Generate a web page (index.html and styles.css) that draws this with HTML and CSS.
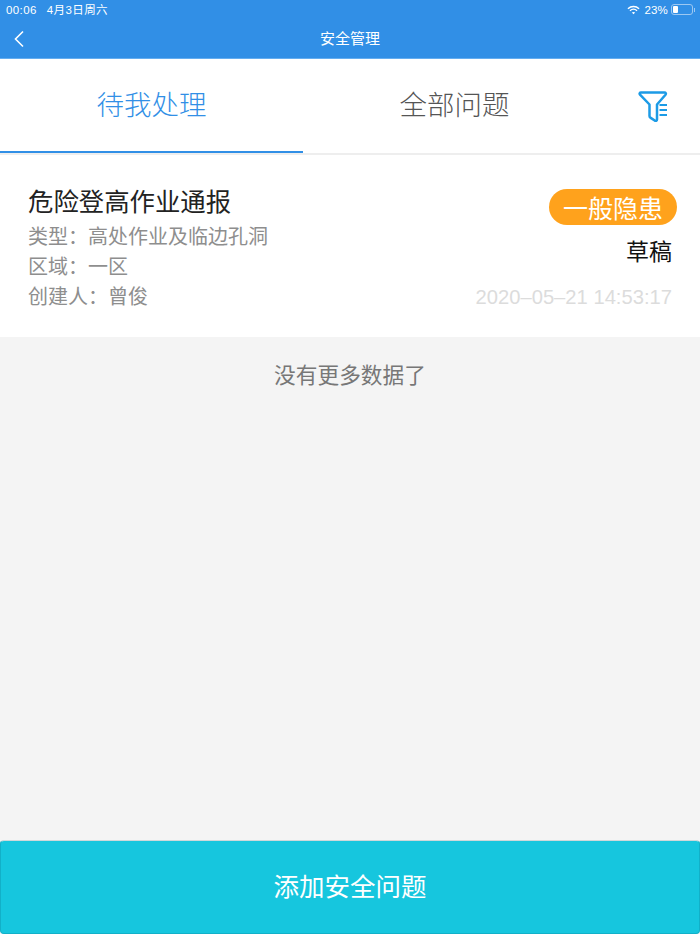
FILE: index.html
```html
<!DOCTYPE html>
<html lang="zh-CN">
<head>
<meta charset="utf-8">
<title>安全管理</title>
<link rel="stylesheet" href="styles.css">
</head>
<body>
<div class="app">
  <header class="header">
    <div class="status">
      <div class="status-left"><span class="time">00:06</span><span class="date">4月3日周六</span></div>
      <div class="status-right">
        <svg class="wifi" viewBox="0 0 14 10" width="13" height="10"><path d="M1 3.600C4.400.4 9.600.4 13 3.600" fill="none" stroke="#fff" stroke-width="1.500"/><path d="M3.200 5.800c2.200-2 5.400-2 7.600 0" fill="none" stroke="#fff" stroke-width="1.500"/><path d="M5.200 7.700c1-.9 2.600-.9 3.600 0L7 9.600z" fill="#fff"/></svg>
        <span class="pct">23%</span>
        <span class="battery"><span class="battery-fill"></span></span><span class="battery-cap"></span>
      </div>
    </div>
    <div class="nav">
      <svg class="back" viewBox="0 0 12 18" width="12" height="18"><path d="M10 1.500 2.500 9l7.500 7.500" fill="none" stroke="#fff" stroke-width="1.600"/></svg>
      <span class="nav-title">安全管理</span>
    </div>
  </header>
  <nav class="tabs">
    <div class="tab tab-active">待我处理</div>
    <div class="tab">全部问题</div>
    <svg class="filter" viewBox="0 0 30 31" width="30" height="31"><path d="M3 1.500h23.500c1.300 0 1.800 1.200 1 2.200L19 13.500V28.500c0 1.300-1.300 1.800-2.300 1.100l-4-2.700c-.8-.5-1.200-1.100-1.200-2V13.500L2 3.700c-.8-1-.3-2.200 1-2.200Z" fill="none" stroke="#1c9be6" stroke-width="2.500" stroke-linejoin="round"/><path d="M21.500 14h7.500M21.500 19h7.500M21.500 24h7.500" stroke="#1c9be6" stroke-width="2.200"/></svg>
  </nav>
  <section class="card">
    <div class="card-main">
      <h2 class="card-title">危险登高作业通报</h2>
      <p class="meta">类型：高处作业及临边孔洞</p>
      <p class="meta">区域：一区</p>
      <p class="meta">创建人：曾俊</p>
    </div>
    <div class="card-side">
      <span class="badge">一般隐患</span>
      <span class="state">草稿</span>
      <span class="stamp">2020–05–21 14:53:17</span>
    </div>
  </section>
  <div class="no-more">没有更多数据了</div>
  <button class="add">添加安全问题</button>
</div>
</body>
</html>
```
FILE: styles.css
```css
* { box-sizing: border-box; }
html, body { margin: 0; padding: 0; }
body { font-family: "Noto Sans CJK SC", "Liberation Sans", sans-serif; background: #f4f4f4; }
.app { width: 700px; height: 934px; display: flex; flex-direction: column; overflow: hidden; background: #f4f4f4; }
.header { height: 59px; background: #318fe6; border-bottom: 1px solid #64adf0; color: #fff; display: flex; flex-direction: column; }
.status { height: 19px; display: flex; justify-content: space-between; align-items: center; padding: 0 5px 0 6px; font-family: "Liberation Sans", "Noto Sans CJK SC", sans-serif; font-size: 11.500px; }
.status-left { display: flex; align-items: center; gap: 10px; line-height: 14px; letter-spacing: .4px; }
.status-right { display: flex; align-items: center; line-height: 14px; }
.wifi { margin-right: 4px; }
.pct { margin-right: 3px; letter-spacing: .2px; }
.battery { width: 22px; height: 11px; border: 1px solid #9cc8f2; border-radius: 3px; padding: 1px; display: flex; }
.battery-fill { width: 5px; background: #fff; border-radius: 1px; }
.battery-cap { width: 1px; height: 4px; background: #9cc8f2; margin-left: 1px; }
.nav { flex: 1; position: relative; display: flex; align-items: center; justify-content: center; padding-bottom: 1px; }
.back { position: absolute; left: 13px; top: 11px; }
.nav-title { font-size: 15px; line-height: 20px; }
.tabs { height: 96px; background: #fff; border-bottom: 2px solid #eeeeee; display: flex; position: relative; }
.tab { width: 303px; height: 94px; display: flex; align-items: center; justify-content: center; font-size: 27.500px; color: #555; padding-bottom: 4px; border-bottom: 2px solid transparent; font-weight: 300; }
.tab-active { color: #318fe6; border-bottom-color: #318fe6; }
.filter { position: absolute; left: 638px; top: 32px; }
.card { height: 182px; background: #fff; display: flex; justify-content: space-between; padding: 30px 23px 0 28px; }
.card-title { margin: 0 0 6px; font-size: 25.400px; line-height: 30px; font-weight: 400; color: #222; }
.meta { margin: 0; font-size: 20px; line-height: 30px; color: #8e8e8e; }
.card-side { display: flex; flex-direction: column; align-items: flex-end; position: relative; padding-top: 2px; }
.badge { width: 128px; height: 36px; margin-top: 2px; background: #ffa21c; color: #fff; border-radius: 18px; font-size: 25px; line-height: 36px; text-align: center; }
.state { margin-top: 9px; margin-right: 5px; font-size: 23px; line-height: 32px; color: #111; }
.stamp { margin-top: 18px; margin-right: 5px; font-family: "Liberation Sans", sans-serif; font-size: 20.200px; line-height: 26px; color: #dcdcdc; }
.no-more { flex: 1; text-align: center; padding-top: 22px; font-size: 21.700px; line-height: 30px; color: #777; }
.add { height: 94px; width: 700px; flex: none; border: 1px solid #12b0c8; border-top-color: #cfd8da; border-radius: 4px; background: #16c6de; color: #fff; font-family: inherit; font-size: 25.500px; padding: 0 0 6px; }
```
